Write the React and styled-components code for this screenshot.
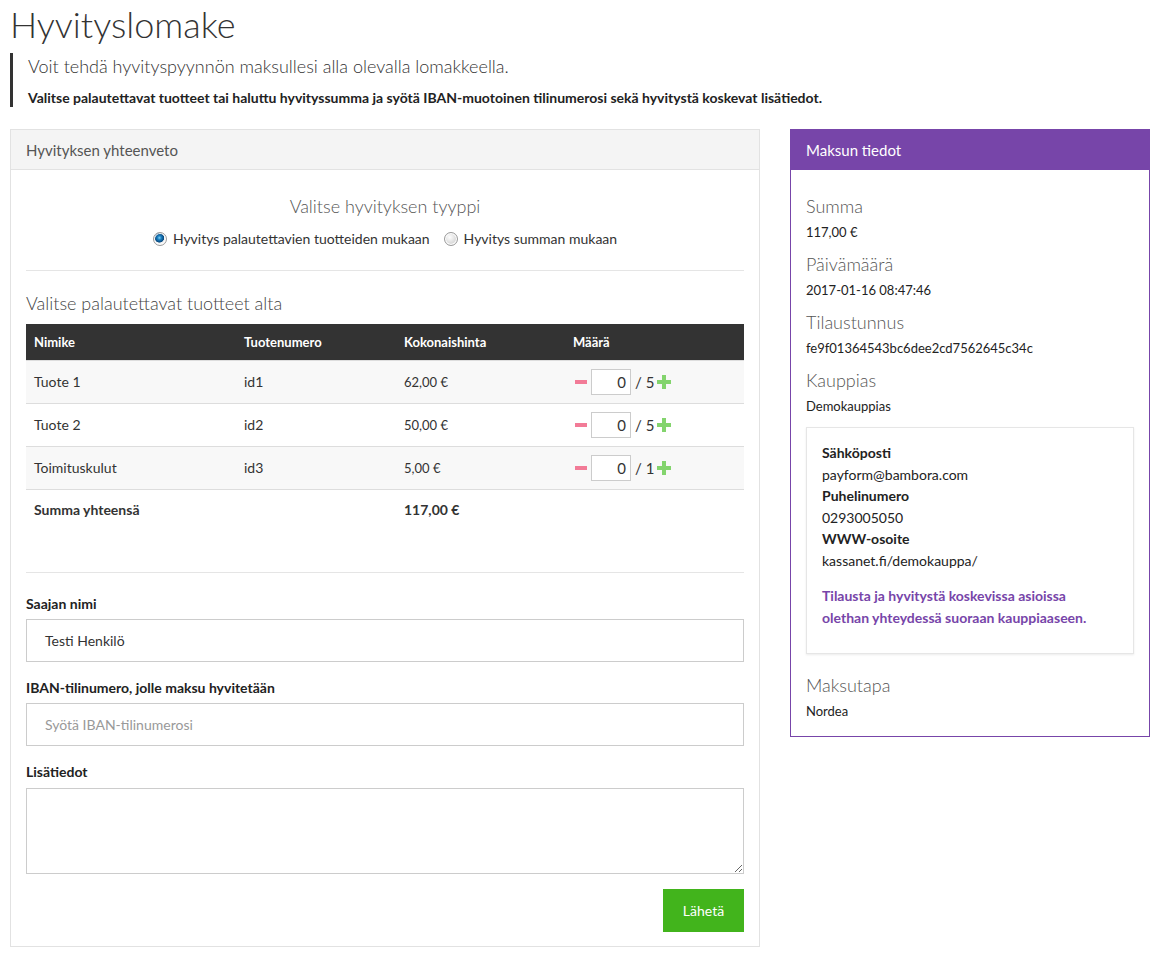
import * as React from "react";
import styled, { createGlobalStyle } from "styled-components";

const GlobalStyle = createGlobalStyle`
  html, body {
    margin: 0;
    padding: 0;
    background: #fff;
  }
  body {
    font-family: Lato, "Noto Sans", sans-serif;
    color: #333;
    font-size: 14px;
  }
  * { box-sizing: border-box; }
`;

const products = [
  { name: "Tuote 1", id: "id1", price: "62,00 €", max: 5 },
  { name: "Tuote 2", id: "id2", price: "50,00 €", max: 5 },
  { name: "Toimituskulut", id: "id3", price: "5,00 €", max: 1 },
];

const details = [
  { label: "Summa", value: "117,00 €" },
  { label: "Päivämäärä", value: "2017-01-16 08:47:46" },
  { label: "Tilaustunnus", value: "fe9f01364543bc6dee2cd7562645c34c" },
  { label: "Kauppias", value: "Demokauppias" },
];

function MinusIcon() {
  return (
    <svg width="14" height="14" viewBox="0 0 14 14">
      <rect x="1" y="5" width="12" height="4" fill="#f27b97" />
    </svg>
  );
}

function PlusIcon() {
  return (
    <svg width="14" height="14" viewBox="0 0 14 14">
      <rect x="0" y="5" width="14" height="4" fill="#83d46d" />
      <rect x="5" y="0" width="4" height="14" fill="#83d46d" />
    </svg>
  );
}

export default function App() {
  return (
    <Page>
      <GlobalStyle />
      <Title>Hyvityslomake</Title>
      <Quote>
        <Lead>Voit tehdä hyvityspyynnön maksullesi alla olevalla lomakkeella.</Lead>
        <Instructions>
          Valitse palautettavat tuotteet tai haluttu hyvityssumma ja syötä
          IBAN-muotoinen tilinumerosi sekä hyvitystä koskevat lisätiedot.
        </Instructions>
      </Quote>
      <Columns>
        <Panel>
          <PanelHeader>Hyvityksen yhteenveto</PanelHeader>
          <PanelBody>
            <TypeTitle>Valitse hyvityksen tyyppi</TypeTitle>
            <RadioRow>
              <RadioLabel>
                <Radio $checked />
                Hyvitys palautettavien tuotteiden mukaan
              </RadioLabel>
              <RadioLabel>
                <Radio />
                Hyvitys summan mukaan
              </RadioLabel>
            </RadioRow>
            <Rule />
            <SectionTitle>Valitse palautettavat tuotteet alta</SectionTitle>
            <Table>
              <thead>
                <tr>
                  <Th $w={210}>Nimike</Th>
                  <Th $w={160}>Tuotenumero</Th>
                  <Th $w={169}>Kokonaishinta</Th>
                  <Th>Määrä</Th>
                </tr>
              </thead>
              <tbody>
                {products.map((p, i) => (
                  <Row key={p.id} $striped={i % 2 === 0}>
                    <Td>{p.name}</Td>
                    <Td>{p.id}</Td>
                    <Td $small>{p.price}</Td>
                    <Td>
                      <Qty>
                        <IconBtn>
                          <MinusIcon />
                        </IconBtn>
                        <QtyInput>0</QtyInput>
                        <QtyMax>/ {p.max}</QtyMax>
                        <IconBtn>
                          <PlusIcon />
                        </IconBtn>
                      </Qty>
                    </Td>
                  </Row>
                ))}
                <SumRow>
                  <Td $bold>Summa yhteensä</Td>
                  <Td />
                  <Td $bold>117,00 €</Td>
                  <Td />
                </SumRow>
              </tbody>
            </Table>
            <Rule $top={43} />
            <Field $first>
              <Label>Saajan nimi</Label>
              <Input>Testi Henkilö</Input>
            </Field>
            <Field>
              <Label>IBAN-tilinumero, jolle maksu hyvitetään</Label>
              <Input $placeholder>Syötä IBAN-tilinumerosi</Input>
            </Field>
            <Field>
              <Label>Lisätiedot</Label>
              <TextArea />
            </Field>
            <Actions>
              <SubmitButton>Lähetä</SubmitButton>
            </Actions>
          </PanelBody>
        </Panel>

        <SidePanel>
          <SideHeader>Maksun tiedot</SideHeader>
          <SideBody>
            {details.map((d) => (
              <Detail key={d.label}>
                <DetailLabel>{d.label}</DetailLabel>
                <DetailValue>{d.value}</DetailValue>
              </Detail>
            ))}
            <ContactBox>
              <ContactLine $bold>Sähköposti</ContactLine>
              <ContactLine>payform@bambora.com</ContactLine>
              <ContactLine $bold>Puhelinumero</ContactLine>
              <ContactLine>0293005050</ContactLine>
              <ContactLine $bold>WWW-osoite</ContactLine>
              <ContactLine>kassanet.fi/demokauppa/</ContactLine>
              <Notice>
                Tilausta ja hyvitystä koskevissa asioissa
                <br />
                olethan yhteydessä suoraan kauppiaaseen.
              </Notice>
            </ContactBox>
            <Detail $spaced>
              <DetailLabel>Maksutapa</DetailLabel>
              <DetailValue>Nordea</DetailValue>
            </Detail>
          </SideBody>
        </SidePanel>
      </Columns>
    </Page>
  );
}

const Page = styled.div`
  width: 1164px;
  padding: 0 10px 12px;
`;

const Title = styled.h1`
  margin: 0;
  padding-top: 2px;
  font-size: 36px;
  line-height: 44px;
  font-weight: 300;
  color: #333;
`;

const Quote = styled.blockquote`
  margin: 7px 0 0;
  padding: 0 0 0 15px;
  border-left: 3px solid #333;
`;

const Lead = styled.div`
  font-size: 18px;
  line-height: 26px;
  font-weight: 300;
  color: #333;
`;

const Instructions = styled.div`
  margin-top: 10px;
  font-size: 14px;
  line-height: 18px;
  font-weight: 700;
  color: #222;
`;

const Columns = styled.div`
  display: grid;
  grid-template-columns: 750px 360px;
  column-gap: 30px;
  align-items: start;
  margin-top: 22px;
`;

const Panel = styled.section`
  border: 1px solid #e2e2e2;
  background: #fff;
`;

const PanelHeader = styled.div`
  height: 40px;
  padding: 0 15px;
  display: flex;
  align-items: center;
  background: #f4f4f4;
  border-bottom: 1px solid #e2e2e2;
  font-size: 15px;
  color: #555;
`;

const PanelBody = styled.div`
  padding: 23px 15px 14px;
`;

const TypeTitle = styled.div`
  text-align: center;
  font-size: 18px;
  line-height: 26px;
  font-weight: 300;
  color: #555;
`;

const RadioRow = styled.div`
  margin-top: 10px;
  display: flex;
  justify-content: center;
  gap: 14px;
  line-height: 20px;
  font-size: 14px;
`;

const RadioLabel = styled.label`
  display: inline-flex;
  align-items: center;
  gap: 6px;
`;

const Radio = styled.span`
  width: 14px;
  height: 14px;
  border-radius: 50%;
  border: 1px solid #9a9a9a;
  background: ${(p) =>
    p.$checked
      ? "radial-gradient(circle at 45% 40%, #7fd0f5 0, #1a7fc0 2px, #0b4f86 4px, #0b4f86 4.5px, #f2f2f2 5px)"
      : "radial-gradient(circle at 40% 35%, #fdfdfd 0, #dcdcdc 6px)"};
  box-shadow: inset 0 0 0 1px #fff;
`;

const Rule = styled.hr`
  margin: ${(p) => (p.$top ? `${p.$top}px` : "21px")} 0 0;
  border: 0;
  border-top: 1px solid #e5e5e5;
`;

const SectionTitle = styled.div`
  margin-top: 19px;
  font-size: 18px;
  line-height: 26px;
  font-weight: 300;
  color: #444;
`;

const Table = styled.table`
  margin-top: 8px;
  width: 100%;
  border-collapse: collapse;
  font-size: 14px;
`;

const Th = styled.th`
  width: ${(p) => (p.$w ? `${p.$w}px` : "auto")};
  height: 36px;
  padding: 0 8px;
  text-align: left;
  background: #333;
  color: #fff;
  font-size: 13px;
  font-weight: 700;
`;

const Row = styled.tr`
  height: 43px;
  background: ${(p) => (p.$striped ? "#f8f8f8" : "#fff")};
  border-top: 1px solid #ddd;
`;

const SumRow = styled.tr`
  height: 40px;
  border-top: 1px solid #ddd;
`;

const Td = styled.td`
  padding: 0 8px;
  vertical-align: middle;
  font-size: ${(p) => (p.$small ? "13px" : "14px")};
  font-weight: ${(p) => (p.$bold ? 700 : 400)};
  color: #333;
`;

const Qty = styled.div`
  display: flex;
  align-items: center;
`;

const IconBtn = styled.span`
  display: inline-flex;
  width: 16px;
  justify-content: center;
`;

const QtyInput = styled.span`
  width: 40px;
  height: 26px;
  margin-left: 2px;
  padding: 0 4px;
  display: flex;
  align-items: center;
  justify-content: flex-end;
  border: 1px solid #ccc;
  background: #fff;
  font-size: 15px;
`;

const QtyMax = styled.span`
  margin: 0 2px 0 4px;
  font-size: 15px;
`;

const Field = styled.div`
  margin-top: ${(p) => (p.$first ? "21px" : "16px")};
`;

const Label = styled.div`
  font-size: 14px;
  line-height: 20px;
  font-weight: 700;
  color: #222;
`;

const Input = styled.div`
  margin-top: 5px;
  height: 43px;
  padding: 0 18px;
  display: flex;
  align-items: center;
  border: 1px solid #ccc;
  background: #fff;
  font-size: 14px;
  color: ${(p) => (p.$placeholder ? "#999" : "#333")};
`;

const TextArea = styled.textarea`
  display: block;
  margin-top: 6px;
  width: 100%;
  height: 86px;
  border: 1px solid #ccc;
  resize: vertical;
  font-family: inherit;
  font-size: 14px;
  outline: none;
`;

const Actions = styled.div`
  margin-top: 15px;
  display: flex;
  justify-content: flex-end;
`;

const SubmitButton = styled.button`
  width: 81px;
  height: 43px;
  border: 0;
  background: #42b41c;
  color: #fff;
  font-family: inherit;
  font-size: 14px;
`;

const SidePanel = styled.aside`
  border: 1px solid #7745a9;
  background: #fff;
`;

const SideHeader = styled.div`
  height: 40px;
  padding: 0 15px;
  display: flex;
  align-items: center;
  background: #7745a9;
  color: #fff;
  font-size: 15px;
`;

const SideBody = styled.div`
  padding: 24px 15px 15px;
`;

const Detail = styled.div`
  margin-top: ${(p) => (p.$spaced ? "19px" : "0")};
  & + & {
    margin-top: 10px;
  }
`;

const DetailLabel = styled.div`
  font-size: 18px;
  line-height: 24px;
  font-weight: 300;
  color: #555;
`;

const DetailValue = styled.div`
  margin-top: 4px;
  font-size: 13px;
  line-height: 20px;
  color: #222;
`;

const ContactBox = styled.div`
  margin-top: 11px;
  padding: 14px 15px 25px;
  border: 1px solid #e6e6e6;
  box-shadow: 0 1px 2px rgba(0, 0, 0, 0.08);
`;

const ContactLine = styled.div`
  font-size: 14px;
  line-height: 21.5px;
  font-weight: ${(p) => (p.$bold ? 700 : 400)};
  color: #222;
`;

const Notice = styled.p`
  margin: 14px 0 0;
  font-size: 14px;
  line-height: 21.5px;
  font-weight: 700;
  color: #7745a9;
`;
